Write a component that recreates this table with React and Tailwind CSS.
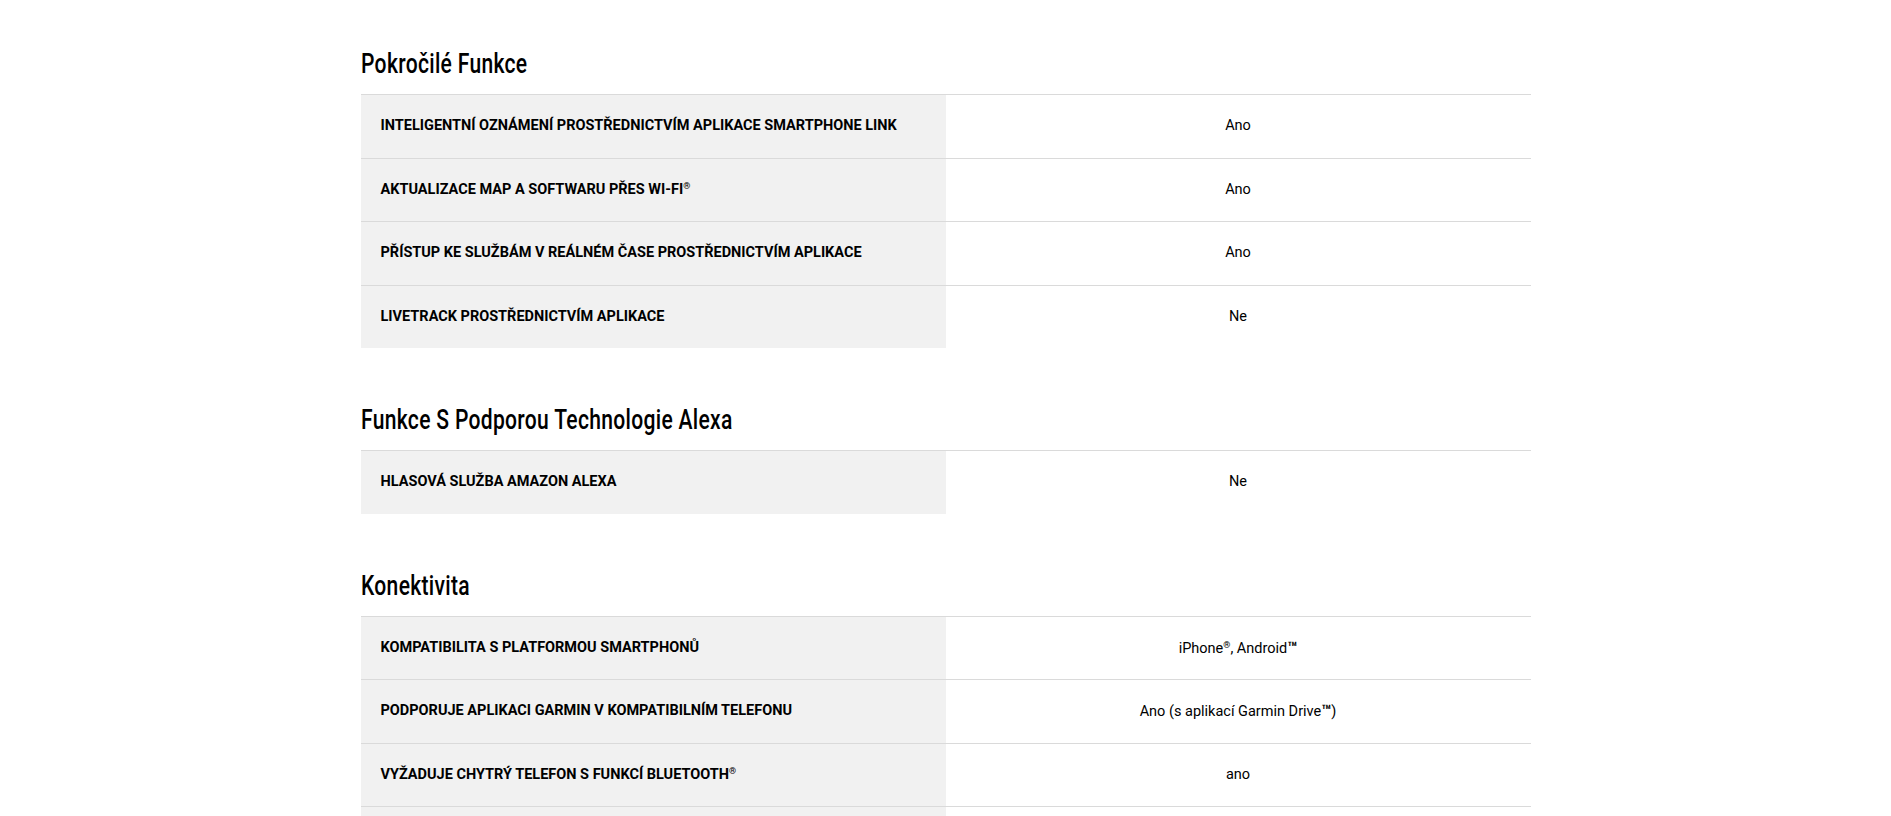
const sections = [
  {
    title: 'Pokročilé Funkce',
    rows: [
      ['Inteligentní oznámení prostřednictvím aplikace Smartphone Link', 'Ano'],
      ['Aktualizace map a softwaru přes Wi-Fi®', 'Ano'],
      ['Přístup ke službám v reálném čase prostřednictvím aplikace', 'Ano'],
      ['LiveTrack prostřednictvím aplikace', 'Ne'],
    ],
  },
  {
    title: 'Funkce S Podporou Technologie Alexa',
    rows: [['Hlasová služba Amazon Alexa', 'Ne']],
  },
  {
    title: 'Konektivita',
    rows: [
      ['Kompatibilita s platformou smartphonů', 'iPhone®, Android™'],
      ['Podporuje aplikaci Garmin v kompatibilním telefonu', 'Ano (s aplikací Garmin Drive™)'],
      ['Vyžaduje chytrý telefon s funkcí Bluetooth®', 'ano'],
      ['Kalendář', 'Ano'],
    ],
  },
];

// trademark signs sit raised and small like on the original site
function Marks({ text }) {
  return text.split(/([®™])/).map((part, i) => {
    if (part === '®') {
      return (
        <span key={i} className="relative -top-[5px] text-[9px] font-bold">
          ®
        </span>
      );
    }
    if (part === '™') {
      return (
        <span key={i} className="text-[16px] font-bold">
          ™
        </span>
      );
    }
    return part;
  });
}

function SpecRow({ label, value }) {
  return (
    <div className="flex h-[63.5px] border-t border-[#dadada]">
      <div className="flex w-1/2 items-center bg-[#f1f1f1] pl-5 text-[14.5px] font-bold uppercase text-black">
        <span>
          <Marks text={label} />
        </span>
      </div>
      <div className="flex w-1/2 items-center justify-center text-[14.5px] text-black">
        <span>
          <Marks text={value} />
        </span>
      </div>
    </div>
  );
}

export default function App() {
  return (
    <div className="min-h-screen bg-white pt-[46px] font-['Roboto',sans-serif]">
      <div className="mx-auto w-[1170px]">
        {sections.map((s, i) => (
          <section key={s.title} className={i > 0 ? 'mt-[54px]' : ''}>
            <h2 className="mb-3 h-9 origin-left scale-x-[0.78] whitespace-nowrap text-[27px] font-medium leading-9 tracking-[0.4px] text-black">
              {s.title}
            </h2>
            <div>
              {s.rows.map(([label, value]) => (
                <SpecRow key={label} label={label} value={value} />
              ))}
            </div>
          </section>
        ))}
      </div>
    </div>
  );
}
